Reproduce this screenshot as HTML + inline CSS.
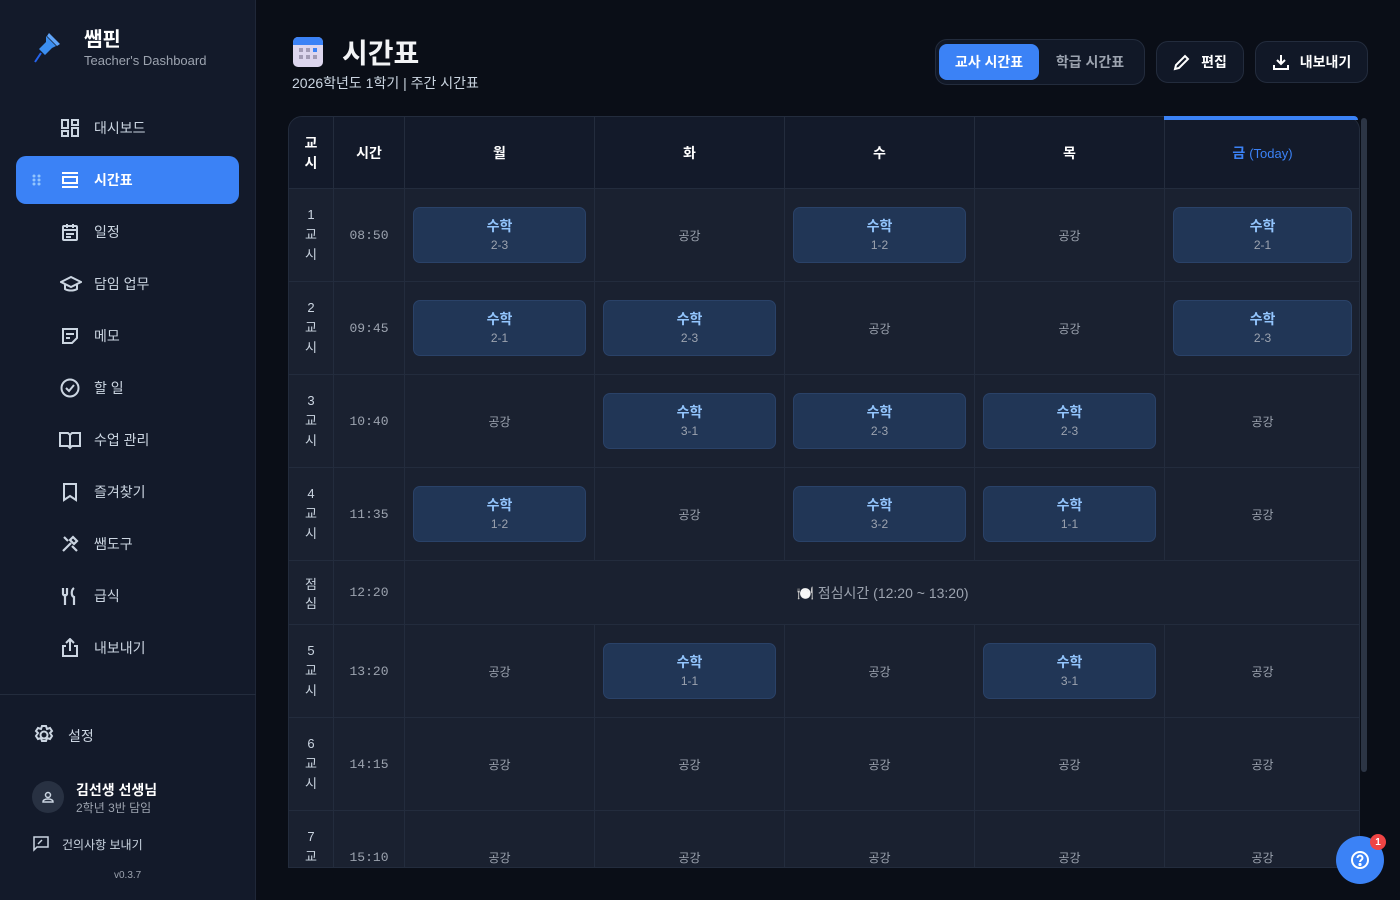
<!DOCTYPE html>
<html><head><meta charset="utf-8"><style>
*{box-sizing:border-box;margin:0;padding:0}
body{width:1400px;height:900px;overflow:hidden;background:#0a0e17;font-family:"Liberation Sans","Noto Sans CJK KR",sans-serif;color:#e5e7eb;position:relative}
.sb{position:absolute;left:0;top:0;width:256px;height:900px;background:#131a2a;border-right:1px solid #1f2738}
.logo{position:absolute;left:84px;top:28px}
.logo b{font-size:20px;color:#fff;display:block;line-height:24px}
.logo span{font-size:13px;color:#9ca3af}
.nav{position:absolute;left:16px;width:223px;height:48px;border-radius:10px;display:flex;align-items:center;font-size:14px;color:#cbd5e1}
.nav svg{position:absolute;left:44px;top:14px}
.nav span{position:absolute;left:78px}
.nav.act{background:#3b82f6;color:#fff;font-weight:bold}
.main{position:absolute;left:256px;top:0}
.tbl{position:absolute;left:288px;top:116px;width:1072px;height:752px;border-radius:14px 14px 0 0;overflow:hidden;background:#1a2130;border:1px solid #232c3d}
.cell{position:absolute;border-right:1px solid #232c3d;border-bottom:1px solid #232c3d;display:flex;align-items:center;justify-content:center;font-size:12px;color:#9ca3af;text-align:center}
.hd{background:#131a2a;color:#fff;font-weight:bold;font-size:14px}
.card{position:absolute;left:8px;right:8px;top:18px;height:56px;background:#213656;border:1px solid #2a4268;border-radius:7px;display:flex;flex-direction:column;align-items:center;justify-content:center}
.card b{color:#93c5fd;font-size:14px;line-height:19px}
.card i{font-style:normal;color:#9ca3af;font-size:12px;line-height:18px}
.mono{font-family:"Liberation Mono",monospace;font-size:13px;color:#9ca3af}
.btn{position:absolute;top:41px;height:42px;border:1px solid #232c3d;background:#111827;border-radius:12px;display:flex;align-items:center;justify-content:center;gap:10px;font-size:14px;font-weight:bold;color:#fff}
</style></head><body>
<div class="sb">
<svg style="position:absolute;left:32px;top:30px" width="32" height="34" viewBox="0 0 32 34"><path d="M14 6 L24 16 L20 18 L13 25 L7 19 L14 12 Z" fill="#3b8ef0"/><path d="M17 3 L28 14 L25 16 L15 6Z" fill="#60a5fa"/><path d="M9 23 L3 32" stroke="#2563eb" stroke-width="2"/></svg>
<div class="logo"><b>쌤핀</b><span>Teacher's Dashboard</span></div>
<div class="nav" style="top:104px"><svg width="20" height="20" viewBox="0 0 20 20" fill="none" stroke="#cbd5e1" stroke-width="2"><rect x="2" y="2" width="6" height="8"/><rect x="12" y="2" width="6" height="5"/><rect x="2" y="13" width="6" height="5"/><rect x="12" y="10" width="6" height="8"/></svg><span>대시보드</span></div>
<div class="nav act" style="top:156px"><svg style="left:16px;top:18px" width="10" height="12" viewBox="0 0 10 12" fill="#93c5fd"><circle cx="2" cy="2" r="1.5"/><circle cx="7" cy="2" r="1.5"/><circle cx="2" cy="6" r="1.5"/><circle cx="7" cy="6" r="1.5"/><circle cx="2" cy="10" r="1.5"/><circle cx="7" cy="10" r="1.5"/></svg><svg width="20" height="20" viewBox="0 0 20 20" fill="none" stroke="#fff" stroke-width="2"><path d="M2 3h16M2 17h16"/><rect x="3" y="7" width="14" height="6"/></svg><span>시간표</span></div>
<div class="nav" style="top:208px"><svg width="20" height="20" viewBox="0 0 20 20" fill="none" stroke="#cbd5e1" stroke-width="2"><rect x="3" y="4" width="14" height="14" rx="1"/><path d="M3 8h14M7 2v4M13 2v4M6 12h8M6 15h5"/></svg><span>일정</span></div>
<div class="nav" style="top:260px"><svg width="22" height="20" viewBox="0 0 22 20" fill="none" stroke="#cbd5e1" stroke-width="2"><path d="M1 8l10-5 10 5-10 5z M5 10v5c3 2 9 2 12 0v-5"/></svg><span>담임 업무</span></div>
<div class="nav" style="top:312px"><svg width="20" height="20" viewBox="0 0 20 20" fill="none" stroke="#cbd5e1" stroke-width="2"><path d="M3 3h14v9l-5 5H3z M6 8h8M6 12h4"/></svg><span>메모</span></div>
<div class="nav" style="top:364px"><svg width="20" height="20" viewBox="0 0 20 20" fill="none" stroke="#cbd5e1" stroke-width="2"><circle cx="10" cy="10" r="8.5"/><path d="M6 10l3 3 5-6"/></svg><span>할 일</span></div>
<div class="nav" style="top:416px"><svg style="left:42px" width="24" height="20" viewBox="0 0 24 20" fill="none" stroke="#cbd5e1" stroke-width="2"><path d="M2 3h8l2 2 2-2h8v13h-8l-2 2-2-2H2z M12 5v13"/></svg><span>수업 관리</span></div>
<div class="nav" style="top:468px"><svg width="20" height="20" viewBox="0 0 20 20" fill="none" stroke="#cbd5e1" stroke-width="2"><path d="M4 2h12v16l-6-4-6 4z"/></svg><span>즐겨찾기</span></div>
<div class="nav" style="top:520px"><svg width="20" height="20" viewBox="0 0 20 20" fill="none" stroke="#cbd5e1" stroke-width="2.2"><path d="M3 17l8-8M13 3l4 4-3 3-4-4zM4 3l4 4M12 12l5 5"/></svg><span>쌤도구</span></div>
<div class="nav" style="top:572px"><svg width="20" height="20" viewBox="0 0 20 20" fill="none" stroke="#cbd5e1" stroke-width="2.2"><path d="M3 2v6c0 2 4 2 4 0V2M5 8v11M14 2c-3 2-3 8 0 9v8"/></svg><span>급식</span></div>
<div class="nav" style="top:624px"><svg width="20" height="20" viewBox="0 0 20 20" fill="none" stroke="#cbd5e1" stroke-width="2"><path d="M6 8H3v10h14V8h-3M10 13V2M6 5l4-4 4 4"/></svg><span>내보내기</span></div>
<div style="position:absolute;left:0;top:694px;width:256px;border-top:1px solid #232c3d"></div>
<svg style="position:absolute;left:33px;top:724px" width="22" height="22" viewBox="0 0 22 22" fill="none" stroke="#cbd5e1" stroke-width="2"><circle cx="11" cy="11" r="3.5"/><path d="M9 2h4l1 3 3-1 2 3-2 2 2 3-2 3-3-1-1 3H9l-1-3-3 1-2-3 2-3-2-2 2-3 3 1z"/></svg>
<div style="position:absolute;left:68px;top:726px;font-size:14px;color:#cbd5e1">설정</div>
<div style="position:absolute;left:32px;top:781px;width:32px;height:32px;border-radius:50%;background:#283142"></div>
<svg style="position:absolute;left:41px;top:790px" width="14" height="14" viewBox="0 0 14 14" fill="none" stroke="#cbd5e1" stroke-width="1.5"><circle cx="7" cy="5" r="2.5"/><path d="M2 12h10c0-2-2-3-5-3s-5 1-5 3z"/></svg>
<div style="position:absolute;left:76px;top:780px;font-size:14px;font-weight:bold;color:#fff">김선생 선생님</div>
<div style="position:absolute;left:76px;top:799px;font-size:12px;color:#9ca3af">2학년 3반 담임</div>
<svg style="position:absolute;left:33px;top:836px" width="16" height="16" viewBox="0 0 16 16" fill="none" stroke="#cbd5e1" stroke-width="1.5"><path d="M1 1h14v10H4l-3 3z M5 8l4-4"/></svg>
<div style="position:absolute;left:62px;top:836px;font-size:12px;color:#cbd5e1">건의사항 보내기</div>
<div style="position:absolute;left:114px;top:870px;font-size:10px;color:#9ca3af">v0.3.7</div>
</div>

<svg style="position:absolute;left:293px;top:37px" width="30" height="30" viewBox="0 0 30 30"><rect x="0" y="0" width="30" height="30" rx="5" fill="#ddd6ee"/><path d="M0 5a5 5 0 015-5h20a5 5 0 015 5v3H0z" fill="#3b82f6"/><g fill="#a29bb5"><rect x="6" y="11" width="4" height="4"/><rect x="13" y="11" width="4" height="4"/><rect x="6" y="18" width="4" height="4"/><rect x="13" y="18" width="4" height="4"/><rect x="20" y="18" width="4" height="4"/></g><rect x="20" y="11" width="4" height="4" fill="#3b82f6"/></svg>
<div style="position:absolute;left:342px;top:32px;font-size:28px;font-weight:bold;color:#f3f4f6">시간표</div>
<div style="position:absolute;left:292px;top:73px;font-size:14px;color:#cbd5e1">2026학년도 1학기 | 주간 시간표</div>

<div style="position:absolute;left:935px;top:39px;width:210px;height:46px;border:1px solid #232c3d;background:#111827;border-radius:12px"></div>
<div style="position:absolute;left:939px;top:44px;width:100px;height:36px;background:#3b82f6;border-radius:8px;color:#fff;font-weight:bold;font-size:14px;display:flex;align-items:center;justify-content:center">교사 시간표</div>
<div style="position:absolute;left:1043px;top:44px;width:94px;height:36px;color:#9ca3af;font-weight:bold;font-size:14px;display:flex;align-items:center;justify-content:center">학급 시간표</div>
<div class="btn" style="left:1156px;width:88px"><svg width="18" height="18" viewBox="0 0 18 18" fill="none" stroke="#fff" stroke-width="2"><path d="M2 16l1-4 9-9 3 3-9 9z"/></svg>편집</div>
<div class="btn" style="left:1255px;width:113px"><svg width="18" height="18" viewBox="0 0 18 18" fill="none" stroke="#fff" stroke-width="2"><path d="M9 2v9M5 7l4 4 4-4M2 12v4h14v-4"/></svg>내보내기</div>

<div class="tbl" id="t"></div>
<div style="position:absolute;left:1361px;top:118px;width:6px;height:654px;background:#2c3545;border-radius:3px"></div>
<div style="position:absolute;left:1164px;top:116px;width:194px;height:4px;background:#3b82f6;border-radius:0 4px 0 0"></div>
<div style="position:absolute;left:1336px;top:836px;width:48px;height:48px;border-radius:50%;background:#3b82f6"></div>
<svg style="position:absolute;left:1350px;top:850px" width="20" height="20" viewBox="0 0 20 20" fill="none" stroke="#fff" stroke-width="2"><circle cx="10" cy="10" r="8"/><path d="M7.5 8a2.5 2.5 0 115 0c0 2-2.5 2-2.5 4"/><circle cx="10" cy="14.5" r="0.6" fill="#fff"/></svg>
<div style="position:absolute;left:1370px;top:834px;width:16px;height:16px;border-radius:50%;background:#ef4444;color:#fff;font-size:10px;font-weight:bold;display:flex;align-items:center;justify-content:center">1</div>

<script>
var t=document.getElementById('t');
var X=[0,45,116,306,496,686,876,1072];
var h='';
function c(x0,x1,y,hh,cls,inner){h+='<div class="cell '+cls+'" style="left:'+X[x0]+'px;width:'+(X[x1]-X[x0])+'px;top:'+y+'px;height:'+hh+'px">'+inner+'</div>';}
var hd=['교<br>시','시간','월','화','수','목','<span style="color:#3b82f6">금 <span style="font-weight:normal;font-size:13px">(Today)</span></span>'];
for(var i=0;i<7;i++)c(i,i+1,0,72,'hd',hd[i]);
var rows=[['1','08:50',['2-3',0,'1-2',0,'2-1']],['2','09:45',['2-1','2-3',0,0,'2-3']],['3','10:40',[0,'3-1','2-3','2-3',0]],['4','11:35',['1-2',0,'3-2','1-1',0]],'L',['5','13:20',[0,'1-1',0,'3-1',0]],['6','14:15',[0,0,0,0,0]],['7','15:10',[0,0,0,0,0]]];
var y=72;
rows.forEach(function(r){
 if(r==='L'){c(0,1,y,64,'','<span style="color:#cbd5e1;font-size:13px">점<br>심</span>');c(1,2,y,64,'mono','12:20');c(2,7,y,64,'','<span style="font-size:14px;color:#9ca3af">🍽️ 점심시간 (12:20 ~ 13:20)</span>');y+=64;return;}
 c(0,1,y,93,'','<span style="color:#cbd5e1;font-size:13px;line-height:20px">'+r[0]+'<br>교<br>시</span>');
 c(1,2,y,93,'mono',r[1]);
 r[2].forEach(function(v,j){c(j+2,j+3,y,93,'',v?'<div class="card"><b>수학</b><i>'+v+'</i></div>':'공강');});
 y+=93;
});
t.innerHTML=h;
</script>
</body></html>
